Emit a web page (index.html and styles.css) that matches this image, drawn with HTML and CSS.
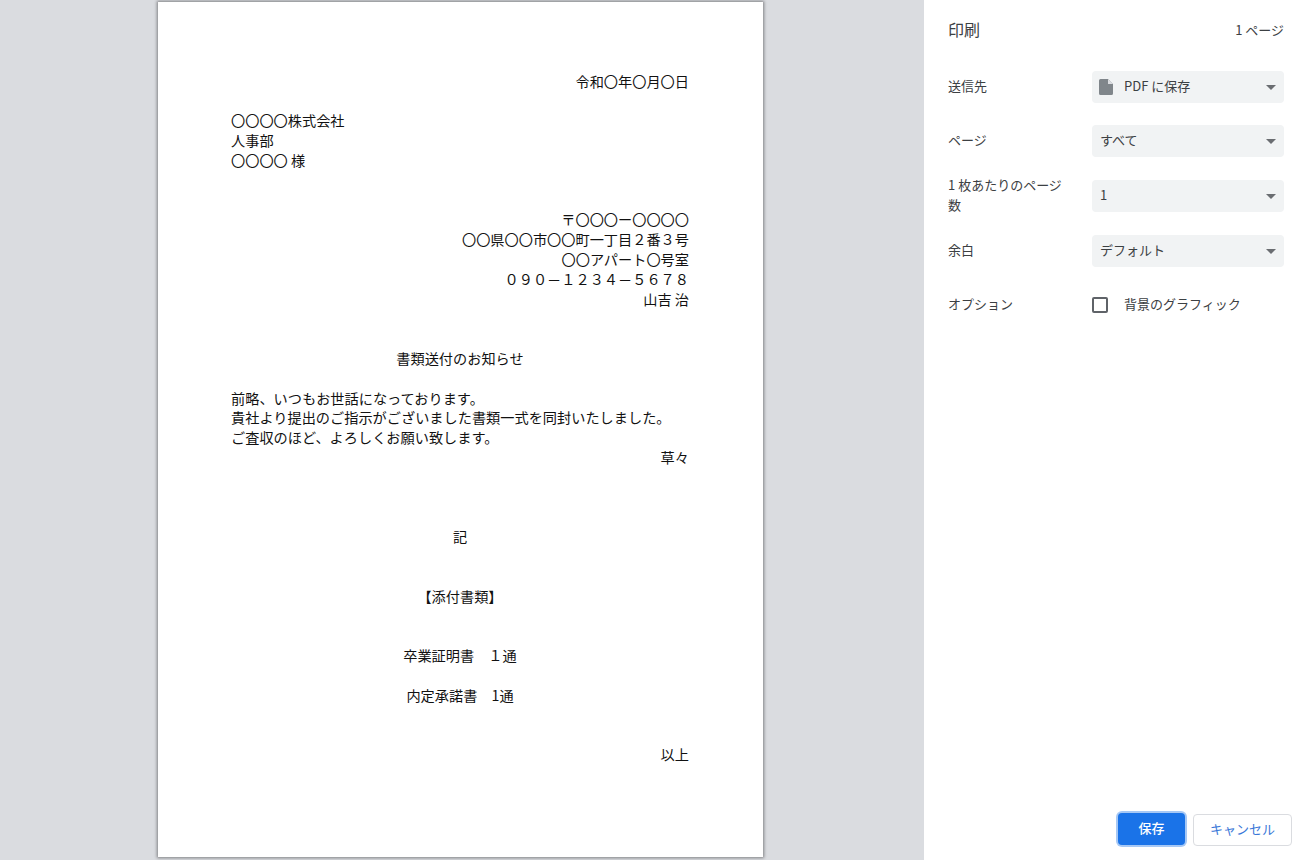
FILE: index.html
```html
<!DOCTYPE html>
<html lang="ja">
<head>
<meta charset="utf-8">
<title>印刷</title>
<link rel="stylesheet" href="styles.css">
</head>
<body>
<main class="preview">
  <article class="paper">
    <p class="right">令和〇年〇月〇日</p>
    <p class="blank"></p>
    <p>〇〇〇〇株式会社</p>
    <p>人事部</p>
    <p>〇〇〇〇 様</p>
    <p class="blank"></p>
    <p class="blank"></p>
    <p class="right">〒〇〇〇ー〇〇〇〇</p>
    <p class="right">〇〇県〇〇市〇〇町一丁目２番３号</p>
    <p class="right">〇〇アパート〇号室</p>
    <p class="right">０９０－１２３４－５６７８</p>
    <p class="right">山吉 治</p>
    <p class="blank"></p>
    <p class="blank"></p>
    <p class="center">書類送付のお知らせ</p>
    <p class="blank"></p>
    <p>前略、いつもお世話になっております。</p>
    <p>貴社より提出のご指示がございました書類一式を同封いたしました。</p>
    <p>ご査収のほど、よろしくお願い致します。</p>
    <p class="right">草々</p>
    <p class="blank"></p>
    <p class="blank"></p>
    <p class="blank"></p>
    <p class="center">記</p>
    <p class="blank"></p>
    <p class="blank"></p>
    <p class="center">【添付書類】</p>
    <p class="blank"></p>
    <p class="blank"></p>
    <p class="center">卒業証明書　１通</p>
    <p class="blank"></p>
    <p class="center">内定承諾書　1通</p>
    <p class="blank"></p>
    <p class="blank"></p>
    <p class="right">以上</p>
  </article>
</main>
<aside class="sidebar">
  <header class="head">
    <h1 class="title">印刷</h1>
    <span class="count">1 ページ</span>
  </header>
  <div class="settings">
    <div class="row row-dest">
      <span class="label">送信先</span>
      <div class="select">
        <svg class="doc" viewBox="0 0 14 16" aria-hidden="true"><path d="M1.500 0H9l5 5v9.500a1.500 1.500 0 0 1-1.500 1.500h-11A1.500 1.500 0 0 1 0 14.500V1.500A1.500 1.500 0 0 1 1.500 0z" fill="#80868b"/><path d="M9 0v5h5z" fill="#dadce0"/></svg>
        <span class="value">PDF に保存</span>
        <i class="arrow"></i>
      </div>
    </div>
    <div class="row row-pages">
      <span class="label">ページ</span>
      <div class="select"><span class="value">すべて</span><i class="arrow"></i></div>
    </div>
    <div class="row row-sheet">
      <span class="label">1 枚あたりのページ数</span>
      <div class="select"><span class="value">1</span><i class="arrow"></i></div>
    </div>
    <div class="row row-margin">
      <span class="label">余白</span>
      <div class="select"><span class="value">デフォルト</span><i class="arrow"></i></div>
    </div>
    <div class="row row-opt">
      <span class="label">オプション</span>
      <label class="check"><i class="box"></i><span class="value">背景のグラフィック</span></label>
    </div>
  </div>
  <footer class="actions">
    <button class="btn primary" type="button">保存</button>
    <button class="btn ghost" type="button">キャンセル</button>
  </footer>
</aside>
</body>
</html>
```

FILE: styles.css
```css
* { box-sizing: border-box; }
html, body { height: 100%; }
body {
  margin: 0;
  width: 1306px;
  height: 860px;
  display: flex;
  overflow: hidden;
  background: #fff;
  font-family: "Noto Sans CJK JP", "Noto Sans", sans-serif;
  color: #202124;
}
.preview {
  width: 924px;
  height: 860px;
  flex: none;
  background: #dadce0;
  padding: 2px 0 0 158px;
}
.paper {
  width: 605px;
  height: 855px;
  background: #fff;
  box-shadow: 0 0 3px 1px rgba(0, 0, 0, .42);
  padding: 69.8px 74px 0 73px;
  font-size: 14.2px;
  line-height: 19.8px;
  color: #111;
}
.paper p { margin: 0; height: 19.8px; white-space: nowrap; }
.right { text-align: right; }
.center { text-align: center; }

.sidebar {
  width: 382px;
  height: 860px;
  flex: none;
  display: flex;
  flex-direction: column;
  background: #fff;
  padding: 0 22px 0 24px;
  position: relative;
}
.head {
  display: flex;
  justify-content: space-between;
  align-items: center;
  height: 58px;
}
.title { margin: 0; font-size: 16px; font-weight: 400; color: #3c4043; }
.count { font-size: 13px; color: #3c4043; }
.settings {
  display: flex;
  flex-direction: column;
  gap: 22px;
  padding-top: 13px;
  flex: 1;
}
.row {
  display: grid;
  grid-template-columns: 144px 192px;
  grid-template-rows: 32px;
  align-items: center;
  height: 32px;
  flex: none;
  font-size: 13px;
  color: #3c4043;
}
.row-sheet, .row-margin { margin-top: 1px; }
.label { line-height: 20px; width: 120px; padding-bottom: 3px; }
.select {
  height: 32px;
  background: #f1f3f4;
  border-radius: 4px;
  display: flex;
  align-items: center;
  padding: 0 8px;
  color: #3c4043;
}
.doc { width: 14px; height: 16px; margin-right: 11px; margin-left: -1px; flex: none; }
.value { flex: 1; font-size: 13px; padding-bottom: 3px; }
.arrow {
  width: 0;
  height: 0;
  border-left: 5px solid transparent;
  border-right: 5px solid transparent;
  border-top: 5px solid #6a6d71;
}
.check { display: flex; align-items: center; gap: 16px; }
.box {
  width: 16px;
  height: 16px;
  border: 2px solid #5f6368;
  border-radius: 2px;
  flex: none;
}
.actions {
  position: absolute;
  top: 813px;
  left: 194px;
  display: flex;
  align-items: flex-start;
  gap: 8px;
}
.btn {
  font-family: inherit;
  font-size: 13px;
  height: 32px;
  border-radius: 4px;
  padding: 0 0 4px;
  cursor: pointer;
}
.primary {
  width: 67px;
  background: #1a73e8;
  color: #fff;
  border: 0;
  box-shadow: 0 0 0 2px #a6c8f5;
  font-weight: 500;
}
.ghost {
  width: 99px;
  background: #fff;
  color: #3b78d8;
  border: 1px solid #dadce0;
  margin-top: 1px;
}
```
